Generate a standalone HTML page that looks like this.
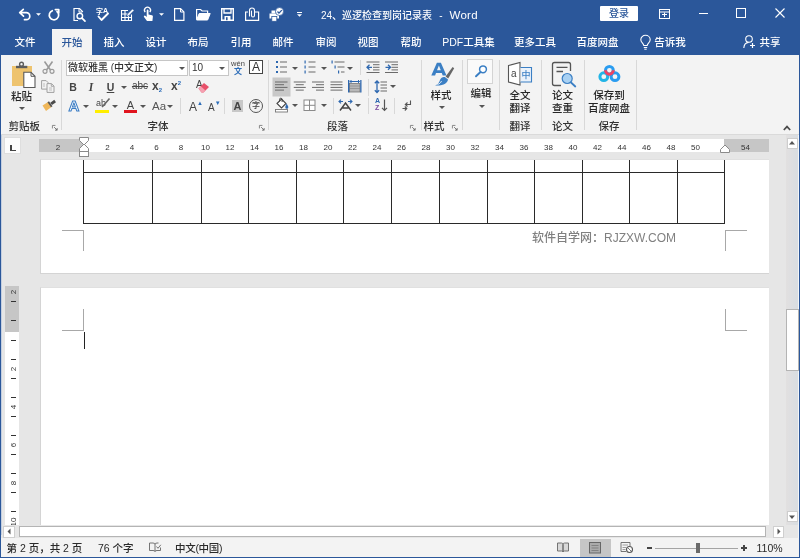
<!DOCTYPE html>
<html lang="zh-CN">
<head>
<meta charset="utf-8">
<title>24、巡逻检查到岗记录表 - Word</title>
<style>
html,body{margin:0;padding:0;}
body{width:800px;height:558px;overflow:hidden;position:relative;background:#e6e6e6;will-change:transform;
 font-family:"Liberation Sans","Noto Sans CJK SC",sans-serif;font-size:10px;color:#333;font-weight:500;}
.a{position:absolute;}
.t{position:absolute;white-space:nowrap;line-height:14px;height:14px;}
.c{text-align:center;}
.w{color:#fff;}
svg{position:absolute;overflow:visible;}
#title{left:0;top:0;width:800px;height:55px;background:#2b579a;}
#ribbon{left:1px;top:55px;width:798px;height:79px;background:#f3f3f3;border-bottom:1px solid #dadada;}
.sep{position:absolute;width:1px;background:#d8d8d8;top:60px;height:70px;}
.gl{position:absolute;top:118.500px;margin-left:-0.500px;font-size:10.5px;line-height:14px;color:#333;white-space:nowrap;}
.page{position:absolute;background:#fff;left:40px;width:730px;border:1px solid #d4d4d4;border-top-color:#e0e0e0;box-sizing:border-box;}
.rn{position:absolute;top:140.5px;width:20px;margin-left:-10px;text-align:center;font-size:8px;line-height:13px;color:#333;}
.vn{position:absolute;left:7px;width:13px;height:10px;margin-top:-5px;font-size:8px;line-height:10px;color:#333;text-align:center;transform:rotate(-90deg);}
.vt{position:absolute;left:11px;width:5px;height:1px;background:#333;}
.crop{position:absolute;background:#a8a8a8;}
.tl{position:absolute;background:#2a2a2a;}
</style>
</head>
<body>
<!-- TITLE BAR -->
<div id="title" class="a"></div>
<svg style="left:0;top:0;" width="70" height="28" viewBox="0 0 70 28"><path d="M23.300 9.300l-3.600 3.400l3.800 3.400M20 12.700h6.300a3.500 3.500 0 0 1 0 7h-1.800" stroke="#fff" fill="none" stroke-width="1.700" stroke-linecap="round" stroke-linejoin="round"/></svg>
<svg style="left:35.500px;top:12.500px;" width="5" height="3" viewBox="0 0 6 3"><path d="M0 0h6l-3 3z" fill="#fff"/></svg>
<svg style="left:0;top:0;" width="70" height="28" viewBox="0 0 70 28"><path d="M52.300 10.700a4.700 4.700 0 1 0 4.700 0.800" stroke="#fff" fill="none" stroke-width="1.700" stroke-linecap="round"/><path d="M55.300 9.600h3.500v3.400" stroke="#fff" fill="none" stroke-width="1.600" stroke-linecap="round" stroke-linejoin="round"/></svg>
<svg style="left:73px;top:8px;" width="13" height="14" viewBox="0 0 13 14"><path d="M9.500 4v-0.500l-3-3h-5.500v12h4" stroke="#fff" fill="none" stroke-width="1.200"/><path d="M6 0.500v3.500h3.500" stroke="#fff" fill="none" stroke-width="1"/><circle cx="6.800" cy="8" r="2.800" stroke="#fff" fill="none" stroke-width="1.400"/><path d="M9 10.200l3 3" stroke="#fff" fill="none" stroke-width="1.700" stroke-linecap="round"/></svg>
<div class="t w" style="left:96px;top:6.500px;font-size:7px;font-weight:bold;line-height:9px;height:9px;">字<span style="font-size:7px;position:relative;top:-1px;">A</span></div><svg style="left:97px;top:13px;" width="12" height="9" viewBox="0 0 12 9"><path d="M1.500 3.500l3 3.500l6.500-6.500" stroke="#fff" fill="none" stroke-width="1.900" stroke-linecap="round" stroke-linejoin="round"/></svg>
<svg style="left:121px;top:8px;" width="13" height="14" viewBox="0 0 13 14"><path d="M7 2.500h-6.500v10h10v-6M0.500 6h6M0.500 9.500h10M4 2.500v10M7.500 7v5.500" stroke="#fff" fill="none" stroke-width="1.100"/><path d="M5.500 8.500l1-2.500l5-5l1.500 1.500l-5 5z" fill="#fff" stroke="#2b579a" stroke-width="0.500"/></svg>
<svg style="left:142px;top:7px;" width="13" height="15" viewBox="0 0 13 15"><path d="M3.200 5.200a3 3 0 1 1 4.600 0" stroke="#fff" fill="none" stroke-width="1.300"/><path d="M4.700 3.500a0.900 0.900 0 0 1 1.800 0v4l3.500 0.800q1 0.300 0.900 1.300l-0.500 4.400h-5.400l-3-4q-0.500-0.900 0.300-1.300q0.800-0.300 1.400 0.400l1 1z" fill="#fff"/></svg>
<svg style="left:158.500px;top:12.500px;" width="5" height="3" viewBox="0 0 6 3"><path d="M0 0h6l-3 3z" fill="#fff"/></svg>
<svg style="left:174px;top:8px;" width="11" height="13" viewBox="0 0 11 13"><path d="M0.600 0.600h6l3.300 3.300v8.500h-9.300z" stroke="#fff" fill="none" stroke-width="1.200"/><path d="M6.500 0.600v3.400h3.400" stroke="#fff" fill="none" stroke-width="1"/></svg>
<svg style="left:196px;top:8px;" width="15" height="13" viewBox="0 0 15 13"><path d="M0.600 11.500v-10h4l1.500 1.500h5.500v2" stroke="#fff" fill="none" stroke-width="1.200"/><path d="M0.600 12l2.600-6.500h11l-2.600 6.500z" fill="#fff" stroke="#fff" stroke-width="1"/></svg>
<svg style="left:221px;top:8px;" width="13" height="13" viewBox="0 0 13 13"><path d="M0.700 0.700h11.600v11.600h-11.600z" stroke="#fff" fill="none" stroke-width="1.400"/><path d="M3 0.700v4.300h7v-4.300" stroke="#fff" fill="none" stroke-width="1.300"/><rect x="3.500" y="8" width="6" height="4.300" fill="#fff"/><rect x="5" y="9.200" width="1.600" height="3" fill="#2b579a"/></svg>
<svg style="left:245px;top:7px;" width="15" height="14" viewBox="0 0 15 14"><path d="M3 5h-2.400v8.400h13v-8.400h-3.600" stroke="#fff" fill="none" stroke-width="1.200"/><path d="M4.500 9v-5.500a2.500 2.500 0 0 1 5 0v5a1.500 1.500 0 0 1-3 0v-4.500" stroke="#fff" fill="none" stroke-width="1.100" stroke-linecap="round"/></svg>
<svg style="left:269px;top:7px;" width="15" height="15" viewBox="0 0 15 15"><path d="M0.500 6.500h9.500v5h-9.500z" fill="#fff"/><rect x="2.500" y="3.500" width="4" height="3" fill="#fff"/><rect x="2.800" y="9.500" width="5" height="4.800" fill="#fff" stroke="#2b579a" stroke-width="0.800"/><circle cx="10.500" cy="4.500" r="4" fill="#fff" stroke="#2b579a" stroke-width="0.700"/><path d="M8.500 4.500l1.500 1.600l2.800-3" fill="none" stroke="#2b579a" stroke-width="1.300"/></svg>
<div class="a" style="left:297px;top:11.500px;width:5px;height:1px;background:#fff;"></div><svg style="left:297px;top:14px;" width="5" height="3" viewBox="0 0 6 3"><path d="M0 0h6l-3 3z" fill="#fff"/></svg>
<svg style="left:659px;top:9px;" width="11" height="10" viewBox="0 0 11 10"><rect x="0.500" y="0.500" width="10" height="9" stroke="#fff" fill="none" stroke-width="1"/><path d="M0.500 3h10M3 5.500h5M5.500 3.500v4.500" stroke="#fff" fill="none" stroke-width="1"/></svg>
<div class="a" style="left:699px;top:13px;width:9px;height:1px;background:#fff;"></div>
<svg style="left:736px;top:8px;" width="10" height="10" viewBox="0 0 10 10"><rect x="0.500" y="0.500" width="9" height="9" stroke="#fff" fill="none" stroke-width="1"/></svg>
<svg style="left:775px;top:8px;" width="10" height="10" viewBox="0 0 10 10"><path d="M0.500 0.500l9 9M9.500 0.500l-9 9" stroke="#fff" fill="none" stroke-width="1.100"/></svg>
<svg style="left:640px;top:35px;" width="11" height="15" viewBox="0 0 11 15"><path d="M3.800 10.500c0-2-3-3-3-5.800a4.700 4.400 0 0 1 9.400 0c0 2.800-3 3.800-3 5.800z" stroke="#fff" fill="none" stroke-width="1.100"/><path d="M3.800 12.500h3.400M4.300 14.200h2.400" stroke="#fff" fill="none" stroke-width="1"/></svg>
<svg style="left:743px;top:35px;" width="13" height="14" viewBox="0 0 13 14"><circle cx="6" cy="4" r="3.300" stroke="#fff" fill="none" stroke-width="1.100"/><path d="M0.800 13c0.300-3.500 2.500-5.500 4.800-5.600" stroke="#fff" fill="none" stroke-width="1.100"/><path d="M9.500 8v5M7 10.500h5" stroke="#fff" fill="none" stroke-width="1.200"/></svg>

<div class="t w" style="left:321px;top:7.500px;font-size:10px;">24、巡逻检查到岗记录表<span style="margin-left:7px;">-</span><span style="font-size:11.500px;letter-spacing:0.300px;margin-left:7px;">Word</span></div>
<div class="a" style="left:600px;top:6px;width:38px;height:15px;background:#fff;border-radius:1px;"></div>
<div class="t c" style="left:600px;top:7px;width:38px;color:#2b579a;font-size:10px;">登录</div>
<div class="a" style="left:52px;top:29px;width:40px;height:27px;background:#f3f3f3;"></div>
<div class="t c" style="left:-15px;top:35px;width:80px;color:#fff;font-size:10.5px;">文件</div>
<div class="t c" style="left:32px;top:35px;width:80px;color:#2b579a;font-size:10.5px;">开始</div>
<div class="t c" style="left:74px;top:35px;width:80px;color:#fff;font-size:10.5px;">插入</div>
<div class="t c" style="left:116px;top:35px;width:80px;color:#fff;font-size:10.5px;">设计</div>
<div class="t c" style="left:158px;top:35px;width:80px;color:#fff;font-size:10.5px;">布局</div>
<div class="t c" style="left:201px;top:35px;width:80px;color:#fff;font-size:10.5px;">引用</div>
<div class="t c" style="left:243px;top:35px;width:80px;color:#fff;font-size:10.5px;">邮件</div>
<div class="t c" style="left:286px;top:35px;width:80px;color:#fff;font-size:10.5px;">审阅</div>
<div class="t c" style="left:328px;top:35px;width:80px;color:#fff;font-size:10.5px;">视图</div>
<div class="t c" style="left:371px;top:35px;width:80px;color:#fff;font-size:10.5px;">帮助</div>
<div class="t c" style="left:428.5px;top:35px;width:80px;color:#fff;font-size:10.5px;">PDF工具集</div>
<div class="t c" style="left:495px;top:35px;width:80px;color:#fff;font-size:10.5px;">更多工具</div>
<div class="t c" style="left:557.5px;top:35px;width:80px;color:#fff;font-size:10.5px;">百度网盘</div>
<div class="t c" style="left:630px;top:35px;width:80px;color:#fff;font-size:10.5px;">告诉我</div>
<div class="t c" style="left:730px;top:35px;width:80px;color:#fff;font-size:10.5px;">共享</div>

<!-- RIBBON -->
<div id="ribbon" class="a"></div>
<div class="sep" style="left:61px;"></div>
<div class="sep" style="left:268px;"></div>
<div class="sep" style="left:421px;"></div>
<div class="sep" style="left:462px;"></div>
<div class="sep" style="left:499px;"></div>
<div class="sep" style="left:541px;"></div>
<div class="sep" style="left:584px;"></div>
<div class="sep" style="left:636px;"></div>
<div class="gl" style="left:9px;">剪贴板</div>
<div class="gl" style="left:148px;">字体</div>
<div class="gl" style="left:327.5px;">段落</div>
<div class="gl" style="left:424px;">样式</div>
<div class="gl" style="left:510px;">翻译</div>
<div class="gl" style="left:552.5px;">论文</div>
<div class="gl" style="left:599px;">保存</div>
<svg style="left:52px;top:125px;" width="6" height="6" viewBox="0 0 7 7"><path d="M0.500 4v-3.500h3.500" fill="none" stroke="#777" stroke-width="1"/><path d="M2.500 2.500l3.500 3.500M6 3.500v2.500h-2.500" fill="none" stroke="#666" stroke-width="1"/></svg>
<svg style="left:259px;top:125px;" width="6" height="6" viewBox="0 0 7 7"><path d="M0.500 4v-3.500h3.500" fill="none" stroke="#777" stroke-width="1"/><path d="M2.500 2.500l3.500 3.500M6 3.500v2.500h-2.500" fill="none" stroke="#666" stroke-width="1"/></svg>
<svg style="left:410px;top:125px;" width="6" height="6" viewBox="0 0 7 7"><path d="M0.500 4v-3.500h3.500" fill="none" stroke="#777" stroke-width="1"/><path d="M2.500 2.500l3.500 3.500M6 3.500v2.500h-2.500" fill="none" stroke="#666" stroke-width="1"/></svg>
<svg style="left:452px;top:125px;" width="6" height="6" viewBox="0 0 7 7"><path d="M0.500 4v-3.500h3.500" fill="none" stroke="#777" stroke-width="1"/><path d="M2.500 2.500l3.500 3.500M6 3.500v2.500h-2.500" fill="none" stroke="#666" stroke-width="1"/></svg>
<div class="t c" style="left:-18.500px;top:89px;width:80px;color:#262626;font-size:10.5px;">粘贴</div>
<div class="t c" style="left:401px;top:88px;width:80px;color:#262626;font-size:10.5px;">样式</div>
<div class="t c" style="left:441px;top:86px;width:80px;color:#262626;font-size:10.5px;">编辑</div>
<div class="t c" style="left:480px;top:88px;width:80px;color:#262626;font-size:10.5px;">全文</div>
<div class="t c" style="left:480px;top:101px;width:80px;color:#262626;font-size:10.5px;">翻译</div>
<div class="t c" style="left:522.5px;top:88px;width:80px;color:#262626;font-size:10.5px;">论文</div>
<div class="t c" style="left:522.5px;top:101px;width:80px;color:#262626;font-size:10.5px;">查重</div>
<div class="t c" style="left:569px;top:88px;width:80px;color:#262626;font-size:10.5px;">保存到</div>
<div class="t c" style="left:569px;top:101px;width:80px;color:#262626;font-size:10.5px;">百度网盘</div>
<svg style="left:19px;top:106.5px;" width="6" height="3" viewBox="0 0 6 3"><path d="M0 0h6l-3 3z" fill="#555"/></svg>
<svg style="left:438.5px;top:106.0px;" width="6" height="3" viewBox="0 0 6 3"><path d="M0 0h6l-3 3z" fill="#555"/></svg>
<svg style="left:478.5px;top:104.5px;" width="6" height="3" viewBox="0 0 6 3"><path d="M0 0h6l-3 3z" fill="#555"/></svg>
<div class="a" style="left:66px;top:60px;width:122px;height:16px;background:#fff;border:1px solid #c6c6c6;box-sizing:border-box;"></div>
<div class="t" style="left:68px;top:61px;font-size:10px;color:#333;">微软雅黑 (中文正文)</div>
<svg style="left:179px;top:66.5px;" width="6" height="3" viewBox="0 0 6 3"><path d="M0 0h6l-3 3z" fill="#555"/></svg>
<div class="a" style="left:189px;top:60px;width:40px;height:16px;background:#fff;border:1px solid #c6c6c6;box-sizing:border-box;"></div>
<div class="t" style="left:192px;top:61px;font-size:10px;color:#333;">10</div>
<svg style="left:219px;top:66.5px;" width="6" height="3" viewBox="0 0 6 3"><path d="M0 0h6l-3 3z" fill="#555"/></svg>
<div class="t c" style="left:63px;top:79.500px;width:20px;font-weight:bold;font-size:10.500px;color:#444;">B</div>
<div class="t c" style="left:81px;top:79.500px;width:20px;font-style:italic;font-family:'Liberation Serif',serif;font-weight:bold;font-size:11.500px;color:#444;">I</div>
<div class="t c" style="left:100.500px;top:79.500px;width:20px;font-weight:bold;font-size:10.500px;color:#444;text-decoration:underline;">U</div>
<svg style="left:121px;top:85.5px;" width="6" height="3" viewBox="0 0 6 3"><path d="M0 0h6l-3 3z" fill="#555"/></svg>
<div class="t c" style="left:125px;top:79px;width:30px;font-size:10px;color:#444;text-decoration:line-through;">abc</div>
<div class="t" style="left:152px;top:79px;font-weight:bold;font-size:12px;color:#444;">x<span style="font-size:6px;color:#2b6cb8;position:relative;top:2px;">2</span></div>
<div class="t" style="left:171px;top:79px;font-weight:bold;font-size:12px;color:#444;">x<span style="font-size:6px;color:#2b6cb8;position:relative;top:-5px;">2</span></div>
<div class="t c" style="left:64px;top:98px;width:20px;font-size:15px;line-height:16px;height:16px;color:#fff;-webkit-text-stroke:1px #3a7cc4;font-weight:bold;">A</div>
<svg style="left:83px;top:104.5px;" width="6" height="3" viewBox="0 0 6 3"><path d="M0 0h6l-3 3z" fill="#555"/></svg>
<div class="t" style="left:96px;top:96px;font-size:9px;color:#444;">ab</div><div class="a" style="left:95px;top:109.500px;width:13.500px;height:3px;background:#ffee00;"></div>
<svg style="left:101px;top:98px;" width="10" height="10" viewBox="0 0 10 10"><path d="M8.500 0.500l-6 7l-1.500 1.500" stroke="#666" stroke-width="1.600" fill="none"/></svg>
<svg style="left:112px;top:104.5px;" width="6" height="3" viewBox="0 0 6 3"><path d="M0 0h6l-3 3z" fill="#555"/></svg>
<div class="t c" style="left:120.500px;top:97.500px;width:20px;font-size:11px;color:#444;">A</div><div class="a" style="left:123.500px;top:109.500px;width:13.500px;height:3px;background:#e0141e;"></div>
<svg style="left:140px;top:104.5px;" width="6" height="3" viewBox="0 0 6 3"><path d="M0 0h6l-3 3z" fill="#555"/></svg>
<div class="t" style="left:152px;top:99px;font-size:11.500px;color:#555;">Aa</div>
<svg style="left:167px;top:104.5px;" width="6" height="3" viewBox="0 0 6 3"><path d="M0 0h6l-3 3z" fill="#555"/></svg>
<div class="a" style="left:180px;top:98px;width:1px;height:16px;background:#d8d8d8;"></div>
<div class="t" style="left:189px;top:100px;font-size:12px;color:#444;">A<span style="font-size:6px;color:#2b6cb8;position:relative;top:-6px;left:0px;">▲</span></div>
<div class="t" style="left:208px;top:101px;font-size:10px;color:#444;">A<span style="font-size:6px;color:#2b6cb8;position:relative;top:-6px;left:0px;">▼</span></div>
<div class="a" style="left:224px;top:98px;width:1px;height:16px;background:#d8d8d8;"></div>
<div class="a" style="left:232px;top:100px;width:11px;height:12px;background:#c8c8c8;"></div><div class="t c" style="left:227px;top:99px;width:21px;font-size:11px;font-weight:bold;color:#444;">A</div>
<div class="a" style="left:249px;top:99px;width:14px;height:14px;border:1px solid #555;border-radius:50%;box-sizing:border-box;"></div><div class="t c" style="left:246px;top:99px;width:20px;font-size:8px;color:#444;">字</div>
<div class="t c" style="left:227px;top:59px;width:22px;font-size:7.500px;line-height:9px;height:9px;color:#444;">wén</div><div class="t c" style="left:227px;top:67px;width:22px;font-size:8px;line-height:9px;height:9px;color:#2b6cb8;font-weight:bold;">文</div>
<div class="a" style="left:249px;top:60px;width:14px;height:14px;border:1px solid #444;box-sizing:border-box;background:#fff;"></div><div class="t c" style="left:246px;top:60px;width:20px;font-size:12px;color:#333;">A</div>
<svg style="left:11px;top:62px;" width="25" height="26" viewBox="0 0 25 26"><rect x="1" y="4" width="20" height="20" fill="#eec36e"/><rect x="5" y="3.800" width="11.300" height="2.400" fill="#5c5c5c"/><circle cx="10.500" cy="2.200" r="1.900" fill="none" stroke="#5c5c5c" stroke-width="1.400"/><path d="M12.800 10.300h7.200l4 4v11.200h-11.200z" fill="#fff" stroke="#5a5a5a" stroke-width="1.100"/><path d="M20 10.300v4h4" fill="none" stroke="#5a5a5a" stroke-width="1"/></svg>
<svg style="left:42px;top:61px;" width="13" height="13" viewBox="0 0 13 13"><path d="M2.500 0.500l6 8.500M10.500 0.500l-6 8.500" stroke="#9a9a9a" stroke-width="1.600" fill="none"/><circle cx="3" cy="10.300" r="2" fill="none" stroke="#9a9a9a" stroke-width="1.200"/><circle cx="10" cy="10.300" r="2" fill="none" stroke="#9a9a9a" stroke-width="1.200"/></svg>
<svg style="left:41px;top:80px;" width="14" height="13" viewBox="0 0 14 13"><path d="M0.600 0.600h4.500l2 2v6.500h-6.500z" fill="#f3f3f3" stroke="#a0a0a0" stroke-width="1"/><path d="M6 3.600h4.500l2.500 2.500v6.300h-7z" fill="#f3f3f3" stroke="#a0a0a0" stroke-width="1"/><path d="M10.300 3.800v2.500h2.500" fill="none" stroke="#a0a0a0" stroke-width="0.900"/><path d="M2 4h2M2 6h2M8 8h3M8 10h3" stroke="#b0b0b0" stroke-width="0.800"/></svg>
<svg style="left:42px;top:99px;" width="14" height="13" viewBox="0 0 14 13"><path d="M0.500 6.500l5.500-3.500l3.500 5l-5.500 4z" fill="#efb75a"/><path d="M5.500 3.300l1.500-1l3.500 5l-1.500 1z" fill="#555"/><path d="M8.300 3.800l4-3l1.700 2.400l-4 2.800z" fill="#4a4a4a"/></svg>
<div class="t" style="left:196px;top:78px;font-size:10px;color:#444;">A</div><svg style="left:198px;top:82px;" width="12" height="11" viewBox="0 0 12 11"><path d="M0.500 6.500l5.500-5.500l5 4l-5.500 5.500h-2z" fill="#e8506a"/><path d="M0.500 6.500l2.200-2.200l4.500 4l-1.700 2.200h-2z" fill="#f5a0b0"/></svg>
<svg style="left:0;top:0;" width="800" height="140" viewBox="0 0 800 140"><rect x="276" y="61" width="2" height="2" fill="#2e68b0"/><rect x="280" y="61.5" width="7" height="1" fill="#6a6a6a"/><rect x="276" y="66" width="2" height="2" fill="#2e68b0"/><rect x="280" y="66.5" width="7" height="1" fill="#6a6a6a"/><rect x="276" y="71" width="2" height="2" fill="#2e68b0"/><rect x="280" y="71.5" width="7" height="1" fill="#6a6a6a"/><rect x="304.500" y="60.5" width="1.200" height="3" fill="#2e68b0"/><rect x="308.500" y="61.5" width="7" height="1" fill="#6a6a6a"/><rect x="304.500" y="65.5" width="1.200" height="3" fill="#2e68b0"/><rect x="308.500" y="66.5" width="7" height="1" fill="#6a6a6a"/><rect x="304.500" y="70.5" width="1.200" height="3" fill="#2e68b0"/><rect x="308.500" y="71.5" width="7" height="1" fill="#6a6a6a"/><rect x="331.500" y="60.500" width="1.200" height="3" fill="#2e68b0"/><rect x="334.500" y="61.500" width="10" height="1" fill="#6a6a6a"/><rect x="334.500" y="65.500" width="1.200" height="3" fill="#2e68b0"/><rect x="337.500" y="66.500" width="7" height="1" fill="#6a6a6a"/><rect x="338" y="70.500" width="1.200" height="3" fill="#2e68b0"/><rect x="341" y="71.500" width="3.500" height="1" fill="#6a6a6a"/><rect x="366.5" y="61.500" width="13" height="1" fill="#6a6a6a"/><rect x="366.5" y="72" width="13" height="1" fill="#6a6a6a"/><rect x="373.0" y="64.2" width="6.500" height="1" fill="#6a6a6a"/><rect x="373.0" y="66.8" width="6.500" height="1" fill="#6a6a6a"/><rect x="373.0" y="69.4" width="6.500" height="1" fill="#6a6a6a"/><rect x="385" y="61.500" width="13" height="1" fill="#6a6a6a"/><rect x="385" y="72" width="13" height="1" fill="#6a6a6a"/><rect x="391.5" y="64.2" width="6.500" height="1" fill="#6a6a6a"/><rect x="391.5" y="66.8" width="6.500" height="1" fill="#6a6a6a"/><rect x="391.5" y="69.4" width="6.500" height="1" fill="#6a6a6a"/><path d="M372 67.300h-5M369.500 64.800l-2.500 2.500l2.500 2.500" stroke="#2e68b0" stroke-width="1.300" fill="none"/><path d="M385.500 67.300h5M388 64.800l2.500 2.500l-2.500 2.500" stroke="#2e68b0" stroke-width="1.300" fill="none"/><rect x="272.500" y="77.500" width="18" height="19" fill="#c8c8c8"/><rect x="275" y="81.5" width="12.5" height="1" fill="#6a6a6a"/><rect x="293.75" y="81.5" width="12" height="1" fill="#6a6a6a"/><rect x="312" y="81.5" width="12" height="1" fill="#6a6a6a"/><rect x="330.500" y="81.5" width="12" height="1" fill="#6a6a6a"/><rect x="275" y="84.2" width="9" height="1" fill="#6a6a6a"/><rect x="295.75" y="84.2" width="8" height="1" fill="#6a6a6a"/><rect x="316" y="84.2" width="8" height="1" fill="#6a6a6a"/><rect x="330.500" y="84.2" width="12" height="1" fill="#6a6a6a"/><rect x="275" y="86.9" width="12.5" height="1" fill="#6a6a6a"/><rect x="293.75" y="86.9" width="12" height="1" fill="#6a6a6a"/><rect x="312" y="86.9" width="12" height="1" fill="#6a6a6a"/><rect x="330.500" y="86.9" width="12" height="1" fill="#6a6a6a"/><rect x="275" y="89.6" width="9" height="1" fill="#6a6a6a"/><rect x="295.75" y="89.6" width="8" height="1" fill="#6a6a6a"/><rect x="316" y="89.6" width="8" height="1" fill="#6a6a6a"/><rect x="330.500" y="89.6" width="12" height="1" fill="#6a6a6a"/><rect x="349.500" y="83.500" width="10.500" height="8.500" fill="#b8b8b8" stroke="#777" stroke-width="0.800"/><rect x="348" y="80" width="1.300" height="12.500" fill="#2e68b0"/><rect x="360.200" y="80" width="1.300" height="12.500" fill="#2e68b0"/><path d="M350 81.500h9.500M351.500 80l-1.500 1.500l1.500 1.500M358 80l1.500 1.500l-1.500 1.500" stroke="#2e68b0" stroke-width="1" fill="none"/><path d="M350 86h10M350 88.500h10" stroke="#888" stroke-width="0.700"/><path d="M377 81v11.500M374.800 83.200l2.200-2.200l2.200 2.200M374.800 90.300l2.200 2.200l2.200-2.200" stroke="#2e68b0" stroke-width="1.300" fill="none"/><rect x="380.500" y="81.5" width="6.500" height="1" fill="#6a6a6a"/><rect x="380.500" y="84.5" width="6.500" height="1" fill="#6a6a6a"/><rect x="380.500" y="87.5" width="6.500" height="1" fill="#6a6a6a"/><rect x="380.500" y="90.5" width="6.500" height="1" fill="#6a6a6a"/><path d="M277 103.500l4.500-4.500l4.500 4.500l-4.500 4.500z" fill="#fff" stroke="#444" stroke-width="1.100"/><path d="M279.500 101.500v-2a1.300 1.300 0 0 1 2.600 0v2.500" fill="none" stroke="#444" stroke-width="1"/><path d="M286.500 103.500c1.200 1.800 1.800 2.800 1.800 3.700a1.500 1.500 0 0 1-3 0c0-0.900 0.600-1.900 1.200-3.700z" fill="#2e68b0"/><rect x="275.500" y="109.500" width="12" height="2.500" fill="#fff" stroke="#777" stroke-width="0.900"/><rect x="304" y="100" width="11" height="10.500" fill="#fff" stroke="#8a8a8a" stroke-width="1"/><path d="M309.500 100v10.500M304 105.300h11" stroke="#8a8a8a" stroke-width="1"/><path d="M339 101.500h4M341 99.700l-2 1.800l2 1.800M348 101.500h4M350 99.700l2 1.800l-2 1.800" stroke="#2e68b0" stroke-width="1.100" fill="none"/><path d="M340 110.500l5.500-7.500l5.500 7.500M342.500 108h6" stroke="#444" stroke-width="1.400" fill="none"/><path d="M384.500 99.500v10.500M382 107.800l2.500 2.500l2.500-2.500" stroke="#555" stroke-width="1.200" fill="none"/><path d="M410.500 100.500v4h-5M407.500 102.500l-2.200 2l2.200 2" stroke="#555" stroke-width="1.100" fill="none"/><path d="M402.500 108.500h4M404.800 106.500l2 2l-2 2" stroke="#555" stroke-width="1.100" fill="none"/></svg>
<div class="t" style="left:375px;top:97px;font-size:7px;line-height:7px;height:7px;color:#2e68b0;font-weight:bold;">A</div><div class="t" style="left:375px;top:104px;font-size:7px;line-height:7px;height:7px;color:#7a4aa0;font-weight:bold;">Z</div>
<svg style="left:292px;top:66.5px;" width="6" height="3" viewBox="0 0 6 3"><path d="M0 0h6l-3 3z" fill="#555"/></svg>
<svg style="left:320.5px;top:66.5px;" width="6" height="3" viewBox="0 0 6 3"><path d="M0 0h6l-3 3z" fill="#555"/></svg>
<svg style="left:347px;top:66.5px;" width="6" height="3" viewBox="0 0 6 3"><path d="M0 0h6l-3 3z" fill="#555"/></svg>
<svg style="left:389.5px;top:85.0px;" width="6" height="3" viewBox="0 0 6 3"><path d="M0 0h6l-3 3z" fill="#555"/></svg>
<svg style="left:292px;top:104.0px;" width="6" height="3" viewBox="0 0 6 3"><path d="M0 0h6l-3 3z" fill="#555"/></svg>
<svg style="left:320.5px;top:104.0px;" width="6" height="3" viewBox="0 0 6 3"><path d="M0 0h6l-3 3z" fill="#555"/></svg>
<svg style="left:354.5px;top:104.0px;" width="6" height="3" viewBox="0 0 6 3"><path d="M0 0h6l-3 3z" fill="#555"/></svg>
<div class="a" style="left:360px;top:60px;width:1px;height:15px;background:#d8d8d8;"></div>
<div class="a" style="left:368px;top:79px;width:1px;height:17px;background:#d8d8d8;"></div>
<div class="a" style="left:332.5px;top:98px;width:1px;height:16px;background:#d8d8d8;"></div>
<div class="a" style="left:368px;top:98px;width:1px;height:16px;background:#d8d8d8;"></div>
<div class="a" style="left:394px;top:98px;width:1px;height:16px;background:#d8d8d8;"></div>
<svg style="left:0;top:0;" width="800" height="140" viewBox="0 0 800 140"><path d="M431.300 75.500l5.600-12.700h4l5.600 12.700h-3.800l-0.900-2.400h-5.800l-0.900 2.400zM437 70.200h3.800l-1.900-4.700z" fill="#3b7fc4" fill-rule="evenodd"/><path d="M454.200 68.200l-1.600-1.200l-7 9.500l2.600 2z" fill="#666"/><path d="M445.500 77.500l2.500 2c-0.500 3.500-4 6.500-13 6c3.500-1 4-3 5-5.500c1-2.500 3.500-3.500 5.500-2.500z" fill="#3b7fc4"/><path d="M437.500 84.500c2-0.500 3.500-2 4-3.500" stroke="#fff" stroke-width="0.800" fill="none"/><rect x="467.500" y="59.500" width="25" height="24" fill="#fafafa" stroke="#d4d4d4" stroke-width="1"/><circle cx="483" cy="69.300" r="3.400" fill="#fff" stroke="#3b7fc4" stroke-width="1.500"/><path d="M480.500 72l-4.500 4.300" stroke="#3b7fc4" stroke-width="1.900" stroke-linecap="round"/><path d="M508.500 65.500l11.500-3v22.500l-11.500-3z" fill="#fff" stroke="#555" stroke-width="1.100"/><path d="M520.500 67.500h11v14.500h-11" fill="#eaf2fb" stroke="#3b7fc4" stroke-width="1.100"/><path d="M570.500 71v-6.500a2 2 0 0 0-2-2h-14a2 2 0 0 0-2 2v19a2 2 0 0 0 2 2h6.500" fill="none" stroke="#555" stroke-width="1.300"/><path d="M556.500 67.300h11M556.500 71.500h6.500" stroke="#555" stroke-width="1.300"/><circle cx="567.200" cy="78.500" r="5" fill="#a9d1f3" stroke="#3b7fc4" stroke-width="1.200"/><path d="M571 82.500l4.300 4" stroke="#3b7fc4" stroke-width="1.800" stroke-linecap="round"/><circle cx="603.800" cy="76.700" r="3.900" fill="none" stroke="#22b4e6" stroke-width="3"/><circle cx="615" cy="76.700" r="3.900" fill="none" stroke="#2a9cf0" stroke-width="3"/><circle cx="609.400" cy="70.300" r="3.900" fill="none" stroke="#2a9cf0" stroke-width="3"/><path d="M605.500 70.300a3.900 3.900 0 0 0 7.800 0" fill="none" stroke="#ee4462" stroke-width="3"/></svg>
<div class="t" style="left:511px;top:67px;font-size:10px;color:#444;">a</div><div class="t" style="left:521.500px;top:68px;font-size:9px;color:#3b7fc4;">中</div>
<svg style="left:783px;top:124.500px;" width="8" height="6" viewBox="0 0 8 6"><path d="M0.800 5l3.200-3.400l3.200 3.400" fill="none" stroke="#4a4a4a" stroke-width="1.700"/></svg>
<!--RIBBON2-->
<!-- DOC -->
<div class="a" style="left:4px;top:137px;width:17px;height:17px;background:#fcfcfc;border:1px solid #dedede;box-sizing:border-box;"></div>
<div class="a" style="left:10px;top:145px;width:1.500px;height:6px;background:#444;"></div><div class="a" style="left:10px;top:149.500px;width:6px;height:1.500px;background:#444;"></div>
<div class="a" style="left:39px;top:139px;width:730px;height:13px;background:#c6c6c6;"></div>
<div class="a" style="left:83px;top:139px;width:641px;height:13px;background:#fff;"></div>
<div class="rn" style="left:58px;">2</div>
<div class="rn" style="left:107.5px;">2</div>
<div class="rn" style="left:132.0px;">4</div>
<div class="rn" style="left:156.5px;">6</div>
<div class="rn" style="left:181.0px;">8</div>
<div class="rn" style="left:205.5px;">10</div>
<div class="rn" style="left:230.0px;">12</div>
<div class="rn" style="left:254.5px;">14</div>
<div class="rn" style="left:279.0px;">16</div>
<div class="rn" style="left:303.5px;">18</div>
<div class="rn" style="left:328.0px;">20</div>
<div class="rn" style="left:352.5px;">22</div>
<div class="rn" style="left:377.0px;">24</div>
<div class="rn" style="left:401.5px;">26</div>
<div class="rn" style="left:426.0px;">28</div>
<div class="rn" style="left:450.5px;">30</div>
<div class="rn" style="left:475.0px;">32</div>
<div class="rn" style="left:499.5px;">34</div>
<div class="rn" style="left:524.0px;">36</div>
<div class="rn" style="left:548.5px;">38</div>
<div class="rn" style="left:573.0px;">40</div>
<div class="rn" style="left:597.5px;">42</div>
<div class="rn" style="left:622.0px;">44</div>
<div class="rn" style="left:646.5px;">46</div>
<div class="rn" style="left:671.0px;">48</div>
<div class="rn" style="left:695.5px;">50</div>
<div class="rn" style="left:745.5px;">54</div>
<svg style="left:78px;top:136px;" width="12" height="24" viewBox="0 0 12 24"><path d="M1.5 1.5h9v3l-4.5 4.5l-4.5-4.500z" fill="#fff" stroke="#8a8a8a" stroke-width="1"/><path d="M1.500 15.500v-3l4.500-4.500l4.500 4.500v3z" fill="#fff" stroke="#8a8a8a"/><rect x="1.500" y="15.500" width="9" height="5" fill="#fff" stroke="#8a8a8a"/></svg>
<svg style="left:719px;top:143px;" width="12" height="12" viewBox="0 0 12 12"><path d="M1.500 9.500v-3l4.500-4.500l4.500 4.500v3z" fill="#fff" stroke="#8a8a8a"/></svg>
<div class="page" style="top:159px;height:115px;"></div>
<div class="page" style="top:287px;height:240px;"></div>
<div class="tl" style="left:83px;top:160px;width:1px;height:64px;"></div>
<div class="tl" style="left:152px;top:160px;width:1px;height:64px;"></div>
<div class="tl" style="left:201px;top:160px;width:1px;height:64px;"></div>
<div class="tl" style="left:248px;top:160px;width:1px;height:64px;"></div>
<div class="tl" style="left:296px;top:160px;width:1px;height:64px;"></div>
<div class="tl" style="left:343px;top:160px;width:1px;height:64px;"></div>
<div class="tl" style="left:391px;top:160px;width:1px;height:64px;"></div>
<div class="tl" style="left:439px;top:160px;width:1px;height:64px;"></div>
<div class="tl" style="left:487px;top:160px;width:1px;height:64px;"></div>
<div class="tl" style="left:534px;top:160px;width:1px;height:64px;"></div>
<div class="tl" style="left:582px;top:160px;width:1px;height:64px;"></div>
<div class="tl" style="left:629px;top:160px;width:1px;height:64px;"></div>
<div class="tl" style="left:677px;top:160px;width:1px;height:64px;"></div>
<div class="tl" style="left:724px;top:160px;width:1px;height:64px;"></div>
<div class="tl" style="left:83px;top:172px;width:642px;height:1px;"></div>
<div class="tl" style="left:83px;top:223px;width:642px;height:1px;"></div>
<div class="crop" style="left:62px;top:230px;width:22px;height:1px;"></div><div class="crop" style="left:83px;top:230px;width:1px;height:21px;"></div>
<div class="crop" style="left:725px;top:230px;width:22px;height:1px;"></div><div class="crop" style="left:725px;top:230px;width:1px;height:21px;"></div>
<div class="crop" style="left:62px;top:330px;width:22px;height:1px;"></div><div class="crop" style="left:83px;top:309px;width:1px;height:21px;"></div>
<div class="crop" style="left:725px;top:330px;width:22px;height:1px;"></div><div class="crop" style="left:725px;top:309px;width:1px;height:21px;"></div>
<div class="a" style="left:84px;top:332px;width:1px;height:17px;background:#222;"></div>
<div class="t" style="left:532px;top:231px;font-size:12px;color:#808080;line-height:15px;">软件自学网：RJZXW.COM</div>
<div class="a" style="left:5px;top:286px;width:14px;height:239px;background:#fff;"></div>
<div class="a" style="left:5px;top:286px;width:14px;height:46px;background:#c6c6c6;"></div>
<div class="vt" style="top:301px;"></div>
<div class="vt" style="top:320px;"></div>
<div class="vt" style="top:340px;"></div>
<div class="vt" style="top:359px;"></div>
<div class="vt" style="top:378px;"></div>
<div class="vt" style="top:397px;"></div>
<div class="vt" style="top:416px;"></div>
<div class="vt" style="top:435px;"></div>
<div class="vt" style="top:454px;"></div>
<div class="vt" style="top:473px;"></div>
<div class="vt" style="top:492px;"></div>
<div class="vt" style="top:511px;"></div>
<div class="vn" style="top:292.45px;">2</div>
<div class="vn" style="top:368.85px;">2</div>
<div class="vn" style="top:407.05px;">4</div>
<div class="vn" style="top:445.25px;">6</div>
<div class="vn" style="top:483.45px;">8</div>
<div class="vn" style="top:521.65px;">10</div>
<div class="a" style="left:786px;top:135px;width:12px;height:390px;background:linear-gradient(90deg,#e2e0e0,#d8dde2);"></div>
<div class="a" style="left:769px;top:135px;width:17px;height:390px;background:#e6e6e6;"></div>
<div class="a" style="left:786.500px;top:137.500px;width:11px;height:11.500px;background:#fff;border:1px solid #cdcdcd;box-sizing:border-box;"></div>
<div class="a" style="left:786.500px;top:510.500px;width:11px;height:11.500px;background:#fff;border:1px solid #cdcdcd;box-sizing:border-box;"></div>

<svg style="left:787px;top:138px;" width="10" height="11"><path d="M2 6.500l3-3.500l3 3.500z" fill="#555"/></svg><svg style="left:787px;top:510.500px;" width="10" height="11"><path d="M2 4.500l3 3.500l3-3.500z" fill="#555"/></svg>
<div class="a" style="left:1px;top:525px;width:798px;height:13px;background:#e6e6e6;"></div>
<div class="a" style="left:19px;top:525.500px;width:747px;height:11.500px;background:#fff;border:1px solid #b4b4b4;box-sizing:border-box;"></div>
<div class="a" style="left:3px;top:525.500px;width:11.500px;height:12px;background:#fff;border:1px solid #cfcfcf;box-sizing:border-box;"></div>
<div class="a" style="left:772.500px;top:525.500px;width:11.500px;height:12px;background:#fff;border:1px solid #cfcfcf;box-sizing:border-box;"></div>
<svg style="left:3px;top:526px;" width="11" height="11"><path d="M7.500 2.500l-3 3l3 3z" fill="#555"/></svg><svg style="left:772.500px;top:526px;" width="11" height="11"><path d="M4.500 2.500l3 3l-3 3z" fill="#555"/></svg>
<div class="a" style="left:0;top:55px;width:1px;height:503px;background:#2b579a;"></div><div class="a" style="left:1px;top:135px;width:1px;height:400px;background:#c4cfe0;"></div>
<div class="a" style="left:799px;top:55px;width:1px;height:503px;background:#2b579a;"></div><div class="a" style="left:798px;top:135px;width:1px;height:403px;background:#f4f6f8;"></div>
<div class="a" style="left:786px;top:309px;width:12.500px;height:61.500px;background:#fefefe;border:1px solid #b4b4b4;box-sizing:border-box;"></div>

<div class="a" style="left:1px;top:538px;width:798px;height:19px;background:#f3f3f3;"></div><div class="a" style="left:0;top:556.500px;width:800px;height:1.500px;background:#2b579a;"></div>
<div class="a" style="left:579.500px;top:538.500px;width:31px;height:18px;background:#c6c6c6;"></div>
<div class="t" style="left:6.500px;top:540.500px;font-size:10.500px;color:#2a2a2a;">第 2 页，共 2 页</div>
<div class="t" style="left:98px;top:540.500px;font-size:10.500px;color:#2a2a2a;">76 个字</div>
<div class="t" style="left:175px;top:540.500px;font-size:10.500px;color:#2a2a2a;letter-spacing:-0.300px;">中文(中国)</div>
<div class="t" style="left:756.500px;top:540.500px;font-size:10.500px;color:#2a2a2a;">110%</div>
<div class="a" style="left:655px;top:547.500px;width:83px;height:1px;background:#a4a4a4;"></div><div class="a" style="left:695.500px;top:543px;width:4px;height:10px;background:#6a6a6a;"></div>
<div class="a" style="left:647px;top:547px;width:5px;height:1.600px;background:#444;"></div><div class="a" style="left:741px;top:547px;width:6px;height:1.600px;background:#444;"></div><div class="a" style="left:743.200px;top:544.800px;width:1.600px;height:6px;background:#444;"></div>
<svg style="left:0;top:0;" width="800" height="558" viewBox="0 0 800 558"><path d="M149.500 543h3.500q2 0 2 1.500v7q0-1-2-1h-3.500zM155 544.500q0-1.500 2-1.500h1.500M155 551.500q0-1 2-1h3.500v-3" fill="none" stroke="#666" stroke-width="0.900"/><path d="M156.500 546.500l1.500 1.800l2.800-3.500" fill="none" stroke="#666" stroke-width="0.900"/><path d="M557.500 543h4q1.500 0 1.500 1.500v7.500q0-1-1.500-1h-4zM568.500 543h-4q-1.500 0-1.500 1.500v7.500q0-1 1.500-1h4z" fill="#d8d8d8" stroke="#666" stroke-width="0.900"/><rect x="589.500" y="542.500" width="11" height="10.500" fill="#aaa" stroke="#666" stroke-width="1"/><path d="M591.500 545.500h7M591.500 548h7M591.500 550.500h7" stroke="#777" stroke-width="0.800"/><path d="M626 551.500h-5v-9h9v3.500" fill="none" stroke="#666" stroke-width="0.900"/><path d="M622.500 545h5.500M622.500 547.500h3.500M622.500 549.500h3" stroke="#888" stroke-width="0.800"/><circle cx="629.500" cy="549.500" r="3" fill="#fff" stroke="#555" stroke-width="1.100"/><path d="M627.500 547.500l4 4" stroke="#555" stroke-width="0.800"/></svg>
</body>
</html>
